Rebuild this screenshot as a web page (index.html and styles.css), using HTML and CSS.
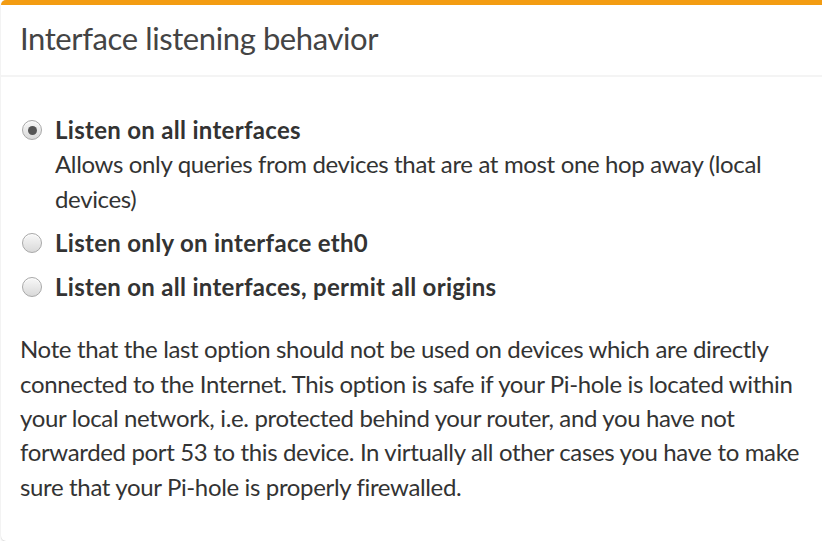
FILE: index.html
```html
<!DOCTYPE html>
<html lang="en">
<head>
<meta charset="utf-8">
<title>Interface listening behavior</title>
<link rel="stylesheet" href="styles.css">
</head>
<body>
<div class="box">
  <div class="box-header">
    <h3 class="box-title">Interface listening behavior</h3>
  </div>
  <div class="box-body">
    <div class="radio-list">
      <label class="radio">
        <input type="radio" name="listen" value="local" checked>
        <span class="radio-text">
          <strong>Listen on all interfaces</strong>
          <span class="radio-desc">Allows only queries from devices that are at most one hop away (local devices)</span>
        </span>
      </label>
      <label class="radio">
        <input type="radio" name="listen" value="single">
        <span class="radio-text"><strong>Listen only on interface eth0</strong></span>
      </label>
      <label class="radio">
        <input type="radio" name="listen" value="all">
        <span class="radio-text"><strong>Listen on all interfaces, permit all origins</strong></span>
      </label>
    </div>
    <p class="note">Note that the last option should not be used on devices which are directly connected to the Internet. This option is safe if your Pi-hole is located within your local network, i.e. protected behind your router, and you have not forwarded port 53 to this device. In virtually all other cases you have to make sure that your Pi-hole is properly firewalled.</p>
  </div>
</div>
</body>
</html>
```
FILE: styles.css
```css
html, body {
  margin: 0;
  padding: 0;
  background: #ffffff;
  overflow: hidden;
}

body {
  font-family: "Lato", "Open Sans", sans-serif;
  color: #333333;
  font-size: 24px;
  line-height: 34.3px;
}

.box {
  margin: 0 -6px 0 1px;
  background: #ffffff;
  border-top: 5px solid #f39c12;
  border-radius: 5px;
  box-shadow: 0 1px 2px rgba(0, 0, 0, 0.16), 0 0 1px rgba(0, 0, 0, 0.08);
}

.box-header {
  padding: 16px 19px 20px;
  border-bottom: 2px solid #f4f4f4;
}

.box-title {
  margin: 0;
  font-size: 31px;
  font-weight: 400;
  line-height: 34px;
  letter-spacing: -0.4px;
  color: #444444;
}

.box-body {
  padding: 36px 26px 37px 19px;
}

.radio-list {
  display: flex;
  flex-direction: column;
  gap: 10px;
}

.radio {
  display: grid;
  grid-template-columns: 35px 1fr;
  align-items: start;
  cursor: pointer;
}

.radio input {
  appearance: none;
  -webkit-appearance: none;
  box-sizing: border-box;
  margin: 7px 0 0 2px;
  width: 20px;
  min-width: 20px;
  height: 20px;
  border-radius: 50%;
  border: 1px solid #a8a8a8;
  background: linear-gradient(#f8f8f8, #d9d9d9);
  box-shadow: inset 0 1px 0 rgba(255, 255, 255, 0.8);
  display: grid;
  place-items: center;
}

.radio input:checked::after {
  content: "";
  width: 9px;
  height: 9px;
  border-radius: 50%;
  background: #555555;
}

.radio-text strong {
  display: block;
  font-weight: 700;
  letter-spacing: 0.3px;
  color: #333333;
}

.radio-desc {
  display: block;
  letter-spacing: -0.35px;
}

.note {
  margin: 28px 0 0;
  letter-spacing: -0.35px;
}
```
